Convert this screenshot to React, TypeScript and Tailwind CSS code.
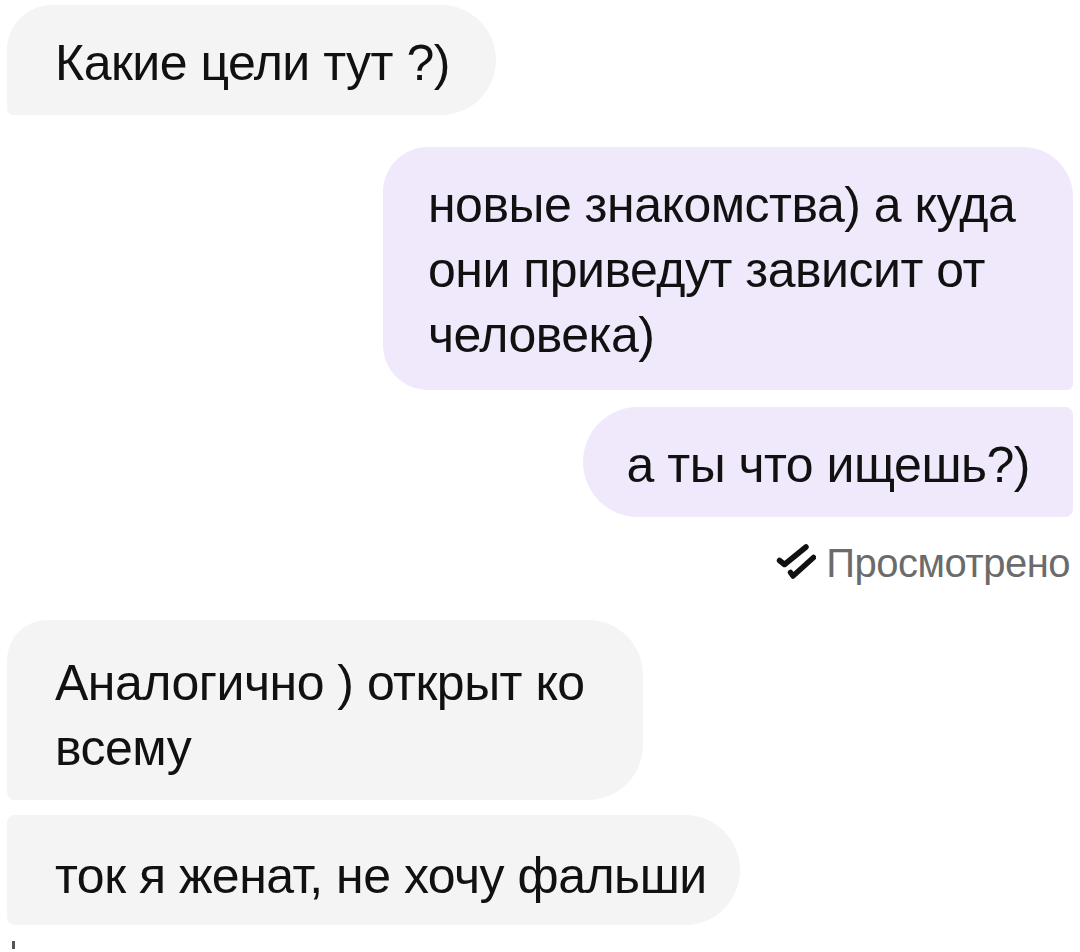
import React from "react";

const font = { fontFamily: '"Liberation Sans", Arial, sans-serif' };

function DoubleCheck() {
  return (
    <svg width="40" height="40" viewBox="0 0 40 40" fill="none" className="shrink-0">
      <path d="M3.5 17.5 L8.5 21.5 L30 4" stroke="#111" strokeWidth="5.5" strokeLinecap="round" strokeLinejoin="round" />
      <path d="M14.5 29.5 L17 33 L37.5 14.5" stroke="#111" strokeWidth="5.5" strokeLinecap="round" strokeLinejoin="round" />
    </svg>
  );
}

export default function App() {
  return (
    <div
      className="w-[1080px] h-[952px] bg-white overflow-hidden flex flex-col px-[7px] pt-[5px] text-[#111] text-[50px] leading-[65px] tracking-[-0.5px]"
      style={font}
    >
      <div className="self-start h-[110px] flex items-center pt-[6px] pl-[48px] pr-[46px] bg-[#f4f4f4] rounded-tl-[45px] rounded-bl-[6px] rounded-r-[55px]">
        Какие цели тут ?)
      </div>

      <div className="self-end mt-[32px] w-[690px] h-[243px] pl-[45px] pt-[26px] pb-[22px] bg-[#efe9fb] rounded-tl-[45px] rounded-bl-[45px] rounded-tr-[50px] rounded-br-[6px]">
        новые знакомства) а куда
        <br />
        они приведут зависит от
        <br />
        человека)
      </div>

      <div className="self-end mt-[17px] h-[110px] flex items-center pt-[6px] pl-[44px] pr-[43px] bg-[#efe9fb] rounded-l-[55px] rounded-r-[8px]">
        а ты что ищешь?)
      </div>

      <div className="self-end mt-[26px] mr-[3px] flex items-center gap-[10px] h-[40px]">
        <DoubleCheck />
        <span className="text-[40px] leading-[40px] text-[#6b6b6b] tracking-[-0.5px]">Просмотрено</span>
      </div>

      <div className="self-start mt-[37px] w-[636px] h-[180px] pl-[48px] pt-[31px] pb-[19px] bg-[#f4f4f4] rounded-tl-[40px] rounded-bl-[8px] rounded-r-[55px]">
        Аналогично ) открыт ко
        <br />
        всему
      </div>

      <div className="self-start mt-[15px] w-[733px] h-[110px] flex items-center pt-[12px] pl-[48px] bg-[#f4f4f4] rounded-l-[8px] rounded-r-[55px]">
        ток я женат, не хочу фальши
      </div>

      <div className="mt-[16px] ml-[5px] w-[3px] h-[8px] bg-[#555]" />
    </div>
  );
}
